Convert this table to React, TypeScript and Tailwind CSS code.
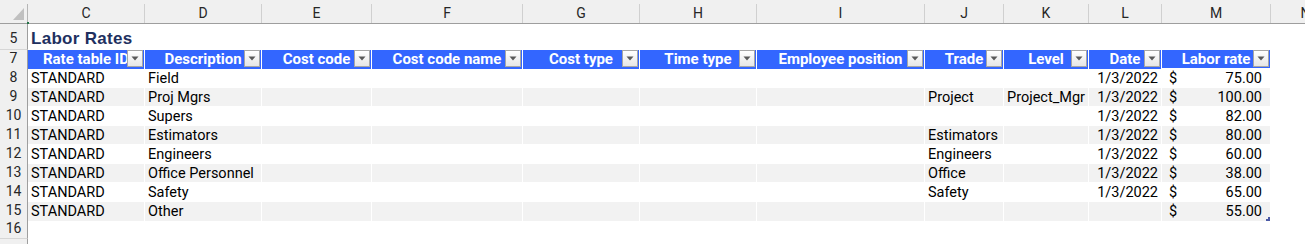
const GRID =
  'grid grid-cols-[28px_117px_117px_110px_151px_117px_117px_168px_79px_85px_73px_109px_70px]'

const LETTERS = ['C', 'D', 'E', 'F', 'G', 'H', 'I', 'J', 'K', 'L', 'M', 'N']

const HEADERS = [
  'Rate table ID',
  'Description',
  'Cost code',
  'Cost code name',
  'Cost type',
  'Time type',
  'Employee position',
  'Trade',
  'Level',
  'Date',
  'Labor rate',
]

interface RateRow {
  row: number
  description: string
  trade?: string
  level?: string
  date?: string
  rate: string
}

const ROWS: RateRow[] = [
  { row: 8, description: 'Field', date: '1/3/2022', rate: '75.00' },
  { row: 9, description: 'Proj Mgrs', trade: 'Project', level: 'Project_Mgr', date: '1/3/2022', rate: '100.00' },
  { row: 10, description: 'Supers', date: '1/3/2022', rate: '82.00' },
  { row: 11, description: 'Estimators', trade: 'Estimators', date: '1/3/2022', rate: '80.00' },
  { row: 12, description: 'Engineers', trade: 'Engineers', date: '1/3/2022', rate: '60.00' },
  { row: 13, description: 'Office Personnel', trade: 'Office', date: '1/3/2022', rate: '38.00' },
  { row: 14, description: 'Safety', trade: 'Safety', date: '1/3/2022', rate: '65.00' },
  { row: 15, description: 'Other', rate: '55.00' },
]

function RowNum({ n, className = '' }: { n?: number; className?: string }) {
  return (
    <div
      className={`bg-[#f0f0f0] border-r border-r-[#9e9e9e] border-b border-b-[#d6d6d6] flex items-end justify-center pb-[1px] leading-[17px] text-[14px] text-[#262626] ${className}`}
    >
      {n}
    </div>
  )
}

function FilterButton() {
  return (
    <div className="absolute right-[1px] top-0 w-[16px] h-[17px] border border-[#a6a6a6] bg-gradient-to-b from-white to-[#e6e6e6] flex items-center justify-center">
      <svg width="8" height="5" viewBox="0 0 8 5">
        <path d="M0.5 0.5 L7.5 0.5 L4 4.5 Z" fill="#595959" />
      </svg>
    </div>
  )
}

export default function App() {
  return (
    <div className="w-[1305px] h-[244px] overflow-hidden bg-white font-['Roboto',sans-serif] text-[14.5px] text-black">
      {/* column letters */}
      <div className={`${GRID} h-[24px] bg-[#f0f0f0] border-b border-[#9e9e9e]`}>
        <div className="relative border-r border-[#b5b5b5] mt-[4px]">
          <svg className="absolute left-[13px] top-[4px]" width="12" height="13" viewBox="0 0 12 13">
            <path d="M0 12 L11 12 L11 0 Z" fill="#c0c0c0" />
          </svg>
          <div className="absolute right-[-2px] bottom-[-1px] w-[2px] h-[2px] bg-[#217346]" />
        </div>
        {LETTERS.map(l => (
          <div
            key={l}
            className="mt-[4px] border-r border-[#d0d0d0] flex items-center justify-center text-[14px] text-[#262626] leading-none pb-[1px]"
          >
            {l}
          </div>
        ))}
      </div>

      {/* title row */}
      <div className={`${GRID} h-[26px]`}>
        <RowNum n={5} className="pb-[2px]" />
        <div className="col-span-12 pl-[3px] flex items-end pb-[3px] font-['Liberation_Sans',sans-serif] font-bold text-[17px] tracking-[0.3px] leading-none text-[#21305f]">
          Labor Rates
        </div>
      </div>

      {/* table header */}
      <div className={`${GRID} h-[18px]`}>
        <RowNum n={7} className="pb-0" />
        {HEADERS.map(h => (
          <div
            key={h}
            className="relative bg-[#3366ff] border-r border-white overflow-hidden flex items-center justify-center font-bold text-[15px] text-white whitespace-nowrap leading-none pb-[1px]"
          >
            {h}
            <FilterButton />
          </div>
        ))}
        <div />
      </div>

      {/* data rows */}
      {ROWS.map((r, i) => {
        const band = i % 2 === 1 ? 'bg-[#f2f2f2]' : 'bg-white'
        const cell = `${band} border-t border-r border-white whitespace-nowrap overflow-hidden leading-[18px] pt-[1px]`
        return (
          <div key={r.row} className={`${GRID} h-[19px]`}>
            <RowNum n={r.row} />
            <div className={`${cell} pl-[3px]`}>STANDARD</div>
            <div className={`${cell} pl-[3px]`}>{r.description}</div>
            <div className={cell} />
            <div className={cell} />
            <div className={cell} />
            <div className={cell} />
            <div className={cell} />
            <div className={`${cell} pl-[3px]`}>{r.trade}</div>
            <div className={`${cell} pl-[3px]`}>{r.level}</div>
            <div className={`${cell} text-right pr-[3px]`}>{r.date}</div>
            <div className={`${cell} relative flex justify-between pl-[7px] pr-[8px] overflow-visible`}>
              <span>$</span>
              <span>{r.rate}</span>
              {r.row === 15 && (
                <div className="absolute right-0 bottom-0 w-[4px] h-[4px] border-r-2 border-b-2 border-[#4b5aa6]" />
              )}
            </div>
            <div />
          </div>
        )
      })}

      {/* trailing empty rows */}
      <div className={`${GRID} h-[19px]`}>
        <RowNum n={16} />
      </div>
      <div className={`${GRID} h-[19px]`}>
        <RowNum />
      </div>
    </div>
  )
}
